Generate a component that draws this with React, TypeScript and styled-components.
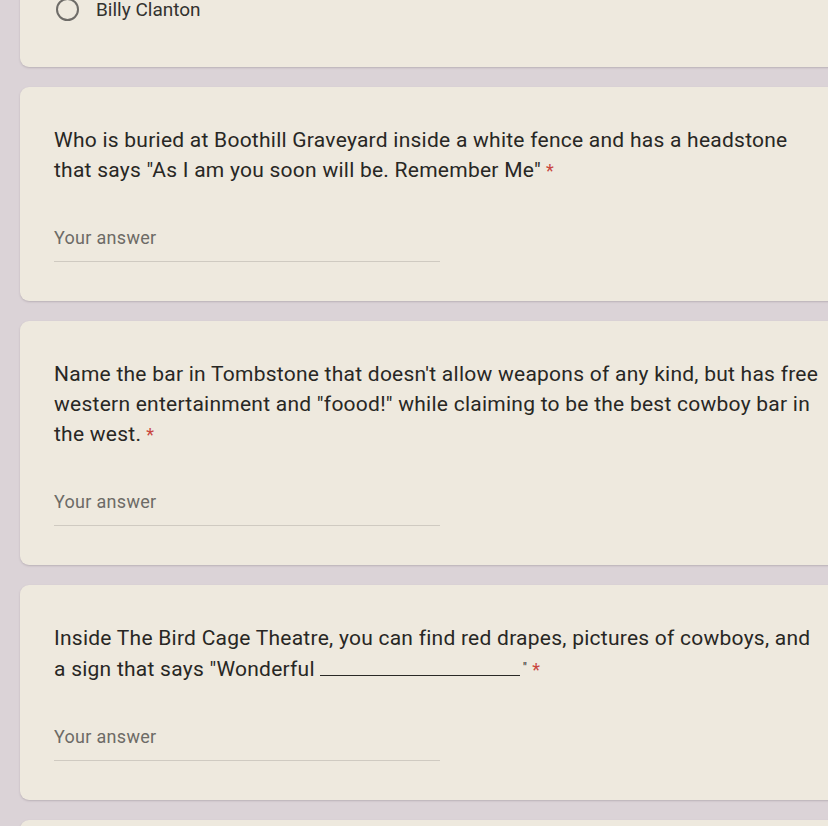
import styled, { createGlobalStyle } from 'styled-components';

const GlobalStyle = createGlobalStyle`
    html, body {
        margin: 0;
        padding: 0;
        background: #dbd3d7;
        overflow: hidden;
    }
    body {
        font-family: Roboto, "Noto Sans", Arial, sans-serif;
        color: #2a2926;
    }
`;

const Page = styled.div`
    display: flex;
    flex-direction: column;
    gap: 20px;
    padding-left: 20px;
    margin-right: -30px;
    margin-top: -33px;
    height: 880px;
`;

const Card = styled.section<{ $top?: number; $bottom?: number }>`
    background: #eee9de;
    border-radius: 9px;
    box-shadow: 0 1px 2px rgba(90, 80, 90, 0.25);
    padding: ${(p) => p.$top ?? 38}px 10px ${(p) => p.$bottom ?? 39}px 34px;
`;

const OptionRow = styled.label`
    display: flex;
    align-items: center;
    gap: 17px;
    padding-left: 2px;
    font-size: 19px;
    color: #33322f;
`;

const Radio = styled.span`
    width: 23px;
    height: 23px;
    border: 2px solid #6e6c68;
    border-radius: 50%;
    box-sizing: border-box;
    flex-shrink: 0;
`;

const Question = styled.p`
    margin: 0;
    font-size: 21px;
    letter-spacing: 0.25px;
    line-height: 30px;
    color: #282724;
    white-space: nowrap;
`;

const Required = styled.span`
    color: #c9463e;
    margin-left: 5px;
    font-size: 18px;
`;

const Blank = styled.span`
    display: inline-block;
    width: 200px;
    margin-left: 5px;
    border-bottom: 1.5px solid #2a2926;
    height: 22px;
    vertical-align: baseline;
`;

const Quote = styled.span`
    font-size: 13px;
    vertical-align: 4px;
    margin-left: 3px;
`;

const Answer = styled.div`
    margin-top: 41px;
    width: 386px;
    padding-bottom: 12px;
    border-bottom: 1px solid #cfcac1;
    font-size: 18px;
    letter-spacing: 0.3px;
    line-height: 22px;
    color: #6d6b66;
`;

export default function App() {
    return (
        <>
            <GlobalStyle />
            <Page>
                <Card $top={31} $bottom={46}>
                    <OptionRow>
                        <Radio />
                        Billy Clanton
                    </OptionRow>
                </Card>
                <Card>
                    <Question>
                        Who is buried at Boothill Graveyard inside a white fence and has a headstone
                        <br />
                        that says "As I am you soon will be. Remember Me"<Required>*</Required>
                    </Question>
                    <Answer>Your answer</Answer>
                </Card>
                <Card>
                    <Question>
                        Name the bar in Tombstone that doesn't allow weapons of any kind, but has free
                        <br />
                        western entertainment and "foood!" while claiming to be the best cowboy bar in
                        <br />
                        the west.<Required>*</Required>
                    </Question>
                    <Answer>Your answer</Answer>
                </Card>
                <Card>
                    <Question>
                        Inside The Bird Cage Theatre, you can find red drapes, pictures of cowboys, and
                        <br />
                        a sign that says "Wonderful<Blank /><Quote>"</Quote><Required>*</Required>
                    </Question>
                    <Answer>Your answer</Answer>
                </Card>
                <Card>
                    <Question>&nbsp;</Question>
                </Card>
            </Page>
        </>
    );
}
